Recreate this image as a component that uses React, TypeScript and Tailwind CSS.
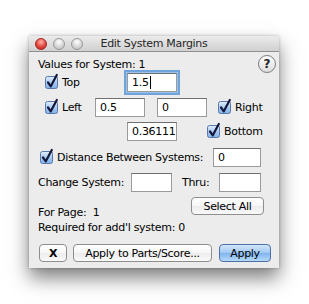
import React from "react";

const font = { fontFamily: '"DejaVu Sans", "Liberation Sans", sans-serif' };

function Check() {
  return (
    <span className="relative inline-block w-[13px] h-[13px] shrink-0">
      <svg width="16" height="16" viewBox="0 0 16 16" className="absolute left-0 top-[-2px] overflow-visible">
        <defs>
          <linearGradient id="cbg" x1="0" y1="0" x2="0" y2="1">
            <stop offset="0" stopColor="#e3eefb" />
            <stop offset="0.5" stopColor="#a9cbf0" />
            <stop offset="1" stopColor="#7eb1ea" />
          </linearGradient>
        </defs>
        <rect x="0.5" y="2.5" width="12" height="12" rx="2" fill="url(#cbg)" stroke="#5b79a8" />
        <path d="M3 8.5 L5.8 12.3 L11.8 1" fill="none" stroke="#14173a" strokeWidth="2.2" strokeLinecap="round" strokeLinejoin="round" />
      </svg>
    </span>
  );
}

function Field({ w, value, focus }: { w: string; value?: string; focus?: boolean }) {
  return (
    <div
      className={`${w} h-[19px] bg-white border border-[#9a9a9a] border-t-[#6f6f6f] flex items-center pl-[4px] text-[11px] text-black shrink-0 ${
        focus ? "shadow-[0_0_0_1px_#9cc1ea,0_0_0_3px_#6fa3db]" : ""
      }`}
    >
      {value}
      {focus && <span className="inline-block w-[1px] h-[13px] bg-black ml-[1px]" />}
    </div>
  );
}

function Btn({ w, children, blue, bold }: { w: string; children: React.ReactNode; blue?: boolean; bold?: boolean }) {
  return (
    <div
      className={`${w} h-[18px] rounded-[4px] border flex items-center justify-center text-[11px] text-black shrink-0 whitespace-nowrap ${
        blue
          ? "border-[#4e6fa8] bg-[linear-gradient(#d3e6fb,#9fc8f3_50%,#7fb3ee_51%,#b6dafb)]"
          : "border-[#8e8e8e] bg-[linear-gradient(#ffffff,#f6f6f6_50%,#ececec_51%,#fafafa)]"
      } ${bold ? "font-bold" : ""}`}
    >
      {children}
    </div>
  );
}

function Light({ red }: { red?: boolean }) {
  return (
    <span
      className={`inline-block w-[12px] h-[12px] rounded-full border ${
        red
          ? "border-[#a5231f] bg-[radial-gradient(circle_at_50%_30%,#ffb3ad,#e2463d_55%,#b8261f)]"
          : "border-[#9a9a9a] bg-[radial-gradient(circle_at_50%_30%,#ffffff,#d6d6d6_55%,#b8b8b8)]"
      }`}
    />
  );
}

export default function App() {
  return (
    <div className="w-[309px] h-[304px] bg-white pt-[36px] pl-[29px]" style={font}>
      <div className="w-[250px] h-[232px] bg-[#ececec] shadow-[0_10px_18px_rgba(0,0,0,0.5),0_0_3px_rgba(0,0,0,0.25)] flex flex-col text-[11px] tracking-[-0.3px] text-black leading-[13px] whitespace-nowrap">
        {/* Title bar */}
        <div className="relative h-[16px] border-b border-[#8f8f8f] bg-[linear-gradient(#ebebeb,#d0d0d0)] flex items-center">
          <div className="flex items-center gap-[6px] pl-[6px]">
            <Light red />
            <Light />
            <Light />
          </div>
          <div className="absolute inset-0 flex items-center justify-center text-[11px] text-[#262626]">
            Edit System Margins
          </div>
        </div>

        {/* Row 1 */}
        <div className="mt-[3px] h-[18px] flex items-center pl-[9px] pr-[3px]">
          <span>Values for System: 1</span>
          <span className="ml-auto w-[18px] h-[18px] rounded-full border border-[#7d7d7d] bg-[linear-gradient(#ffffff,#dcdcdc)] flex items-center justify-center text-[12px] font-bold text-[#222] tracking-normal">
            ?
          </span>
        </div>

        {/* Top */}
        <div className="h-[19px] flex items-center pl-[16px]">
          <Check />
          <span className="ml-[4px] w-[65px]">Top</span>
          <Field w="w-[50px]" value="1.5" focus />
        </div>

        {/* Left / Right */}
        <div className="mt-[6px] h-[19px] flex items-center pl-[16px]">
          <Check />
          <span className="ml-[4px] w-[33px]">Left</span>
          <Field w="w-[50px]" value="0.5" />
          <span className="w-[12px]" />
          <Field w="w-[50px]" value="0" />
          <span className="w-[11px]" />
          <Check />
          <span className="ml-[4px]">Right</span>
        </div>

        {/* Bottom */}
        <div className="mt-[5px] h-[19px] flex items-center pl-[98px]">
          <Field w="w-[50px]" value="0.36111" />
          <span className="w-[30px]" />
          <Check />
          <span className="ml-[4px]">Bottom</span>
        </div>

        {/* Distance */}
        <div className="mt-[7px] h-[19px] flex items-center pl-[11px]">
          <Check />
          <span className="ml-[4px] w-[156px]">Distance Between Systems:</span>
          <Field w="w-[48px]" value="0" />
        </div>

        {/* Change System */}
        <div className="mt-[6px] h-[19px] flex items-center pl-[9px]">
          <span className="w-[93px]">Change System:</span>
          <Field w="w-[41px]" />
          <span className="ml-[10px] w-[37px]">Thru:</span>
          <Field w="w-[42px]" />
        </div>

        {/* For page / Select all */}
        <div className="relative mt-[5px] flex items-start pl-[9px]">
          <div className="flex flex-col pt-[9px]">
            <span className="h-[15px]">For Page:&nbsp; 1</span>
            <span className="h-[15px]">Required for add'l system: 0</span>
          </div>
          <div className="absolute right-[15px] top-0">
            <Btn w="w-[73px]">Select All</Btn>
          </div>
        </div>

        {/* Buttons */}
        <div className="mt-[8px] flex items-center pl-[10px]">
          <Btn w="w-[28px]" bold>X</Btn>
          <span className="w-[6px]" />
          <Btn w="w-[139px]">Apply to Parts/Score...</Btn>
          <span className="w-[7px]" />
          <Btn w="w-[52px]" blue>Apply</Btn>
        </div>
      </div>
    </div>
  );
}
